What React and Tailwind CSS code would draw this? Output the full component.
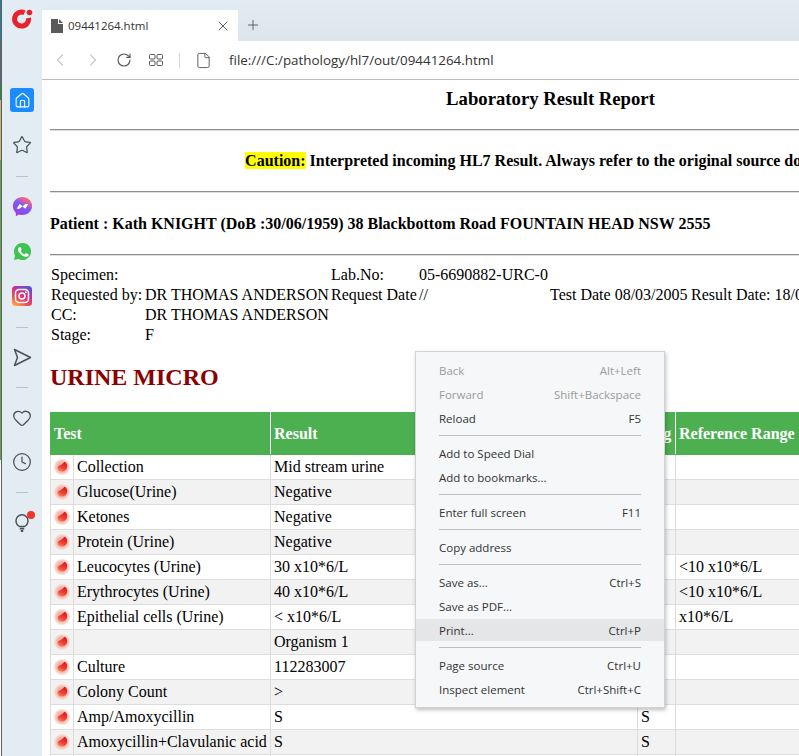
import { ChevronLeft, ChevronRight, RotateCw, File, X, Plus, Star, Heart, Clock, Home } from "lucide-react";

const ROWS = [
  { test: "Collection", result: "Mid stream urine" },
  { test: "Glucose(Urine)", result: "Negative" },
  { test: "Ketones", result: "Negative" },
  { test: "Protein (Urine)", result: "Negative" },
  { test: "Leucocytes (Urine)", result: "30 x10*6/L", range: "<10 x10*6/L" },
  { test: "Erythrocytes (Urine)", result: "40 x10*6/L", range: "<10 x10*6/L" },
  { test: "Epithelial cells (Urine)", result: "< x10*6/L", range: "x10*6/L" },
  { test: "", result: "Organism 1" },
  { test: "Culture", result: "112283007" },
  { test: "Colony Count", result: ">" },
  { test: "Amp/Amoxycillin", result: "S", flag: "S" },
  { test: "Amoxycillin+Clavulanic acid", result: "S", flag: "S" },
  { test: "", result: "" },
];

const MENU = [
  [
    { label: "Back", keys: "Alt+Left", off: true, tall: true },
    { label: "Forward", keys: "Shift+Backspace", off: true },
    { label: "Reload", keys: "F5" },
  ],
  [{ label: "Add to Speed Dial" }, { label: "Add to bookmarks..." }],
  [{ label: "Enter full screen", keys: "F11" }],
  [{ label: "Copy address" }],
  [
    { label: "Save as...", keys: "Ctrl+S" },
    { label: "Save as PDF..." },
    { label: "Print...", keys: "Ctrl+P", active: true },
  ],
  [
    { label: "Page source", keys: "Ctrl+U" },
    { label: "Inspect element", keys: "Ctrl+Shift+C" },
  ],
];

function Bullet() {
  return (
    <svg width="18" height="18" viewBox="0 0 18 18" className="block">
      <defs>
        <radialGradient id="bulletHalo" cx="0.5" cy="0.5" r="0.5">
          <stop offset="0.6" stopColor="#f3b5a6" />
          <stop offset="1" stopColor="#f6e6e2" />
        </radialGradient>
        <linearGradient id="bulletFill" x1="0.75" y1="0" x2="0.25" y2="1">
          <stop offset="0" stopColor="#e0141c" />
          <stop offset="0.6" stopColor="#f0403a" />
          <stop offset="1" stopColor="#f48a5c" />
        </linearGradient>
      </defs>
      <circle cx="9" cy="9" r="8" fill="url(#bulletHalo)" />
      <path d="M11.500 3.800c2 .9 3 2.800 2.700 5-.4 2.900-2.700 4.800-5.400 4.800-2.300 0-4-1.300-4.100-3.300-.1-1.600 1-2.600 2.300-3 1.500-.5 2.800-1.500 4.500-3.500z" fill="url(#bulletFill)" />
    </svg>
  );
}

function OperaLogo() {
  return (
    <svg width="24" height="24" viewBox="0 0 24 24" fill="none">
      <path d="M14.500 5.700a7 7 0 1 0 4 5.300" stroke="#e8212e" strokeWidth="5" />
      <circle cx="19.500" cy="5.500" r="2.800" fill="#e8212e" />
    </svg>
  );
}

function Messenger() {
  return (
    <svg width="21" height="21" viewBox="0 0 24 24">
      <defs>
        <linearGradient id="messengerFill" x1="0.2" y1="1" x2="0.8" y2="0">
          <stop offset="0" stopColor="#a33be0" />
          <stop offset="0.55" stopColor="#7a5cf5" />
          <stop offset="0.8" stopColor="#ee5f8f" />
          <stop offset="1" stopColor="#fb7d5d" />
        </linearGradient>
      </defs>
      <path d="M12 1C5.800 1 1 5.500 1 11.500c0 3.100 1.300 5.800 3.400 7.700V23l3.500-1.900c1.300.4 2.700.6 4.100.6 6.200 0 11-4.500 11-10.200S18.200 1 12 1z" fill="url(#messengerFill)" />
      <path d="M5.300 14.500l3.500-5.400 3.400 2.600 3.200-2.600 3.300 0-3.500 5.400-3.400-2.600-3.200 2.600z" fill="#fff" />
    </svg>
  );
}

function Whatsapp() {
  return (
    <svg width="19" height="19" viewBox="0 0 24 24">
      <path d="M12 1.200A10.800 10.800 0 0 0 2.700 17.500L1.200 22.800l5.500-1.400A10.800 10.800 0 1 0 12 1.200z" fill="#3fc351" />
      <path d="M8.500 6.300c-.3 0-.7.100-1 .5-.4.500-1.200 1.300-1.200 2.900s1.200 3.200 1.400 3.400c.2.200 2.300 3.600 5.700 4.900 2.800 1.100 3.300.9 4 .8.600-.1 2-.8 2.200-1.600.3-.8.300-1.500.2-1.600-.1-.2-.3-.2-.7-.4l-2.300-1.100c-.3-.1-.6-.2-.8.200l-1.100 1.300c-.2.200-.4.300-.8.100-1.900-.8-3.300-2.300-4.300-4-.2-.3 0-.5.100-.7l.8-1c.2-.2.200-.4.100-.7L9.800 7c-.3-.7-.6-.7-.8-.7z" fill="#fff" />
    </svg>
  );
}

function Instagram() {
  return (
    <svg width="20" height="20" viewBox="0 0 20 20">
      <defs>
        <linearGradient id="instaFill" x1="0.1" y1="1" x2="0.7" y2="0">
          <stop offset="0" stopColor="#fdb53f" />
          <stop offset="0.35" stopColor="#ee4a55" />
          <stop offset="0.7" stopColor="#c52f9b" />
          <stop offset="1" stopColor="#5a55d2" />
        </linearGradient>
      </defs>
      <rect width="20" height="20" rx="3.500" fill="url(#instaFill)" />
      <rect x="3.500" y="3.500" width="13" height="13" rx="3.500" fill="none" stroke="#fff" strokeWidth="1.500" />
      <circle cx="10" cy="10" r="3" fill="none" stroke="#fff" strokeWidth="1.500" />
      <circle cx="13.800" cy="6.200" r="0.900" fill="#fff" />
    </svg>
  );
}

function SendIcon() {
  return (
    <svg width="19" height="19" viewBox="0 0 19 19" fill="none" stroke="currentColor" strokeWidth="1.500" strokeLinejoin="round">
      <path d="M1.500 1.500L17.500 9.500L1.500 17.500L4.500 9.500z" />
    </svg>
  );
}

function BulbIcon() {
  return (
    <svg width="14" height="20" viewBox="0 0 14 20" fill="none" stroke="currentColor" strokeWidth="1.400">
      <path d="M4.500 13.500C2.500 12.300 1 10.500 1 7.700a6 6 0 0 1 12 0c0 2.800-1.500 4.600-3.500 5.800z" />
      <path d="M4.800 15.700h4.400M5.800 18h2.400" strokeWidth="1.800" />
    </svg>
  );
}

function SideRule() {
  return <div className="h-px w-[12px] bg-[#b9c1ca]" />;
}

function Sidebar() {
  return (
    <div className="flex w-[40px] shrink-0 flex-col items-center bg-[#e3ebf3] text-[#4a5058]">
      <div className="mt-[7px]"><OperaLogo /></div>
      <div className="mt-[57px] flex h-[24px] w-[24px] items-center justify-center rounded-[3px] bg-[#1a8cff]">
        <Home size={17} strokeWidth={1.500} color="#fff" />
      </div>
      <Star className="mt-[23px]" size={20} strokeWidth={1.500} />
      <div className="mt-[21px]"><SideRule /></div>
      <div className="mt-[19px]"><Messenger /></div>
      <div className="mt-[25px]"><Whatsapp /></div>
      <div className="mt-[25px]"><Instagram /></div>
      <div className="mt-[21px]"><SideRule /></div>
      <div className="mt-[20px]"><SendIcon /></div>
      <div className="mt-[20px]"><SideRule /></div>
      <Heart className="mt-[20px]" size={20} strokeWidth={1.500} />
      <Clock className="mt-[24px]" size={20} strokeWidth={1.500} />
      <div className="mt-[20px]"><SideRule /></div>
      <div className="relative mt-[20px]">
        <BulbIcon />
        <span className="absolute -right-[6px] -top-[2px] h-[8px] w-[8px] rounded-full bg-[#f0352b]" />
      </div>
    </div>
  );
}

function Toolbar() {
  return (
    <div className="flex h-[38px] shrink-0 items-center bg-white text-[#555]">
      <ChevronLeft className="ml-[8px] text-[#c8c8c8]" size={20} strokeWidth={1.500} />
      <ChevronRight className="ml-[13px] text-[#c8c8c8]" size={20} strokeWidth={1.500} />
      <RotateCw className="ml-[13px]" size={16} strokeWidth={1.700} />
      <svg className="ml-[17px]" width="14" height="12" viewBox="0 0 14 12" fill="none" stroke="#555" strokeWidth="1">
        <rect x="0.500" y="0.500" width="5.500" height="4.500" rx="1" />
        <rect x="8" y="0.500" width="5.500" height="4.500" rx="1" />
        <rect x="0.500" y="7" width="5.500" height="4.500" rx="1" />
        <rect x="8" y="7" width="5.500" height="4.500" rx="1" />
      </svg>
      <div className="ml-[16px] h-[15px] w-px bg-[#d5d5d5]" />
      <File className="ml-[15px]" size={17} strokeWidth={1.300} />
      <span className="ml-[17px] pt-px font-['Open_Sans',sans-serif] text-[13.400px] text-[#333]">file:///C:/pathology/hl7/out/09441264.html</span>
    </div>
  );
}

function Rule() {
  return <hr className="border-y border-t-[#8f8f8f] border-b-[#dedede]" />;
}

function Report() {
  return (
    <div className="h-full overflow-hidden bg-white">
      <div className="ml-[8px] w-[1001px] font-['Liberation_Serif',serif] text-[16px] leading-[18px] text-black">
        <h3 className="mb-[19px] mt-[8px] text-center text-[18.720px] font-bold leading-[22px]">Laboratory Result Report</h3>
        <Rule />
        <p className="my-[21px] text-center font-bold">
          <mark className="bg-[#ffff00]">Caution:</mark> Interpreted incoming HL7 Result. Always refer to the original source document.
        </p>
        <Rule />
        <h4 className="mb-[21px] mt-[22px] font-bold">Patient : Kath KNIGHT (DoB :30/06/1959) 38 Blackbottom Road FOUNTAIN HEAD NSW 2555</h4>
        <Rule />
        <div className="mt-[9px] grid w-[1000px] grid-cols-[94px_186px_88px_131px_141px_1fr] auto-rows-[20px] pl-px leading-[20px]">
          <span>Specimen:</span><span />
          <span>Lab.No:</span><span className="col-span-3">05-6690882-URC-0</span>
          <span>Requested by:</span><span>DR THOMAS ANDERSON</span>
          <span>Request Date</span><span>//</span><span>Test Date 08/03/2005</span><span>Result Date: 18/03/2005</span>
          <span>CC:</span><span className="col-span-5">DR THOMAS ANDERSON</span>
          <span>Stage:</span><span className="col-span-5">F</span>
        </div>
        <h2 className="mt-[18px] text-[24px] font-bold leading-[28px] text-[#8b0000]">URINE MICRO</h2>
        <table className="mt-[21px] table-fixed border-collapse">
          <colgroup>
            <col className="w-[23px]" />
            <col className="w-[197px]" />
            <col className="w-[367px]" />
            <col className="w-[38px]" />
            <col className="w-[180px]" />
          </colgroup>
          <thead>
            <tr className="h-[42px] bg-[#4caf50] text-left font-bold text-white">
              <th colSpan={2} className="border border-[#4caf50] border-r-white px-[3px]">Test</th>
              <th className="border border-[#4caf50] border-r-white px-[3px]">Result</th>
              <th className="border border-[#4caf50] border-r-white px-[3px]">Flag</th>
              <th className="border border-[#4caf50] px-[3px]">Reference Range</th>
            </tr>
          </thead>
          <tbody>
            {ROWS.map((row, i) => (
              <tr key={i} className="h-[25px] odd:bg-white even:bg-[#f2f2f2]">
                <td className="border border-[#ddd] p-0"><div className="flex justify-center"><Bullet /></div></td>
                <td className="whitespace-nowrap border border-[#ddd] px-[3px] py-0">{row.test}</td>
                <td className="border border-[#ddd] px-[3px] py-0">{row.result}</td>
                <td className="border border-[#ddd] px-[3px] py-0">{row.flag}</td>
                <td className="border border-[#ddd] px-[3px] py-0">{row.range}</td>
              </tr>
            ))}
          </tbody>
        </table>
      </div>
    </div>
  );
}

function ContextMenu() {
  return (
    <div className="absolute left-[415px] top-[351px] w-[250px] border border-[#d0d2d3] bg-[#f5f7f8] pb-[5px] pt-[6px] font-['Open_Sans',sans-serif] text-[11.500px] text-[#333] shadow-[1px_2px_4px_rgba(0,0,0,0.25)]">
      {MENU.map((group, g) => (
        <div key={g}>
          {g > 0 && <div className="mx-[23px] mb-[6px] mt-[4px] h-px bg-[#bcbfc1]" />}
          {group.map((item) => (
            <div key={item.label}>
              <div className={item.active ? "flex h-[22px] items-center justify-between bg-[#e4e6e7] px-[23px] pt-[2px]" : `flex items-center justify-between px-[23px] ${item.tall ? "h-[25px]" : "h-[24px]"} ${item.off ? "text-[#9c9c9c]" : ""}`}>
                <span>{item.label}</span>
                {item.keys && <span>{item.keys}</span>}
              </div>
              {item.active && <div className="h-[2px]" />}
            </div>
          ))}
        </div>
      ))}
    </div>
  );
}

export default function App() {
  return (
    <div className="relative flex h-[756px] w-[799px] overflow-hidden bg-white">
      <div className="flex w-[2px] shrink-0 flex-col border-r border-[#5c5f62]">
        <div className="h-[40px] bg-[#2e7d9a]" />
        <div className="h-[45px] bg-[#5a6a70]" />
        <div className="h-[15px] bg-[#2f8a3a]" />
        <div className="h-[60px] bg-[#c8b86a]" />
        <div className="h-[300px] bg-[#6aa050]" />
        <div className="flex-1 bg-white" />
      </div>
      <Sidebar />
      <div className="flex min-w-0 flex-1 flex-col">
        <div className="flex h-[41px] shrink-0 items-end bg-gradient-to-b from-[#e3ebf3] to-[#dde4ec]">
          <div className="flex h-[31px] w-[196px] items-center bg-white pl-[9px] pr-[7px] font-['Open_Sans',sans-serif] text-[11.500px] text-[#333]">
            <svg width="12" height="14" viewBox="0 0 12 14"><path d="M0 0h7v5h5v9H0zM8 0l4 4H8z" fill="#5a5a5a" /></svg>
            <span className="ml-[5px] flex-1">09441264.html</span>
            <X size={16} strokeWidth={1.300} color="#444" />
          </div>
          <Plus className="mb-[8px] ml-[7px] text-[#444]" size={16} strokeWidth={1.200} />
        </div>
        <Toolbar />
        <div className="h-px shrink-0 bg-[#bdbdbd]" />
        <div className="min-h-0 flex-1"><Report /></div>
      </div>
      <ContextMenu />
    </div>
  );
}
